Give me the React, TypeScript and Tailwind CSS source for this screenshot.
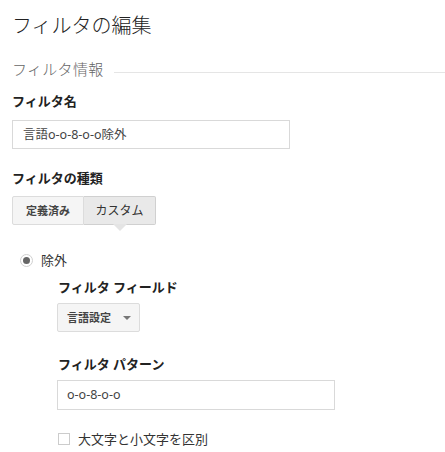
import React from "react";

export default function App() {
  const font = { fontFamily: '"Noto Sans", "Noto Sans CJK JP", sans-serif' };
  return (
    <div className="w-[445px] h-[452px] bg-white overflow-hidden text-[#222]" style={font}>
      <div className="pl-3">
        <h1 className="pt-[10px] text-[20px] leading-[32px] font-light text-[#222]">フィルタの編集</h1>
        <div className="mt-[15px] flex items-center">
          <span className="text-[15px] leading-[24px] text-[#666] font-light tracking-[0.3px]">フィルタ情報</span>
          <div className="flex-1 h-px bg-[#e5e5e5] ml-[10px] mt-[6px]" />
        </div>
        <div className="mt-[10px] text-[13px] leading-[20px] font-bold text-[#222]">フィルタ名</div>
        <div className="mt-[9px] w-[278px] h-[29px] border border-[#d9d9d9] flex items-center px-[10px] text-[12.5px] leading-[18px] text-[#444]">
          言語o-o-8-o-o除外
        </div>
        <div className="mt-[19px] text-[13px] leading-[20px] font-bold text-[#222]">フィルタの種類</div>
        <div className="mt-[8px] flex">
          <div className="w-[72px] h-[29px] border border-[#dcdcdc] bg-[#f5f5f5] rounded-l-[2px] flex items-center justify-center text-[11px] leading-[16px] text-[#444] font-bold">
            定義済み
          </div>
          <div className="relative w-[72px] h-[29px] border border-l-0 border-[#d0d0d0] bg-[#e9e9e9] rounded-r-[2px] flex items-center justify-center text-[12px] leading-[16px] text-[#333]">
            カスタム
            <div className="absolute left-1/2 -translate-x-1/2 top-full w-0 h-0 border-l-[7px] border-r-[7px] border-t-[7px] border-l-transparent border-r-transparent border-t-[#e4e4e4]" />
          </div>
        </div>
        <div className="mt-[28px] ml-[8px] flex items-center h-[14px]">
          <div className="w-[13px] h-[13px] rounded-full border border-[#d0d0d0] bg-white flex items-center justify-center">
            <div className="w-[7px] h-[7px] rounded-full bg-[#666]" />
          </div>
          <span className="ml-[8px] text-[13px] leading-[18px] text-[#333]">除外</span>
        </div>
        <div className="ml-[46px]">
          <div className="mt-[10px] text-[13px] leading-[20px] font-bold text-[#222]">フィルタ フィールド</div>
          <div className="mt-[6px] w-[83px] h-[29px] -ml-px border border-[#dcdcdc] bg-[#f5f5f5] rounded-[2px] flex items-center pl-[9px] text-[11px] leading-[16px] text-[#444] font-bold">
            言語設定
            <svg width="8" height="4" viewBox="0 0 8 4" className="ml-[12px] mt-[1px]">
              <path d="M0 0 L8 0 L4 4 Z" fill="#777" />
            </svg>
          </div>
          <div className="mt-[22px] text-[13px] leading-[20px] font-bold text-[#222]">フィルタ パターン</div>
          <div className="mt-[6px] -ml-px w-[278px] h-[30px] border border-[#d9d9d9] flex items-center px-[9px] text-[12.5px] leading-[18px] text-[#444]">
            o-o-8-o-o
          </div>
          <div className="mt-[22px] flex items-center h-[14px]">
            <div className="w-[12px] h-[12px] border border-[#ccc] bg-white" />
            <span className="ml-[8px] text-[13px] leading-[18px] text-[#333]">大文字と小文字を区別</span>
          </div>
        </div>
      </div>
    </div>
  );
}
